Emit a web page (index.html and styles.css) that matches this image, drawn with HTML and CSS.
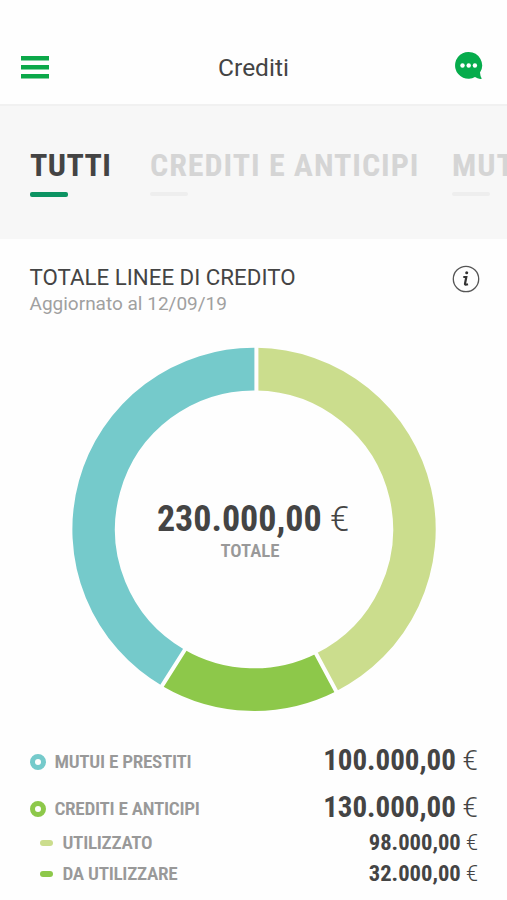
FILE: index.html
```html
<!DOCTYPE html>
<html lang="it">
<head>
    <meta charset="UTF-8">
    <title>Crediti</title>
    <link rel="stylesheet" href="styles.css">
</head>
<body>
<header class="topbar">
    <svg class="menu" width="28" height="24" viewBox="0 0 28 24">
        <path d="M1 3.2h26M1 12.2h26M1 21.2h26"/>
    </svg>
    <h1>Crediti</h1>
    <svg class="chat" width="28" height="28" viewBox="0 0 28 28">
        <path d="M13.7 0A13.4 13.4 0 1 0 20 25.1Q23 27.4 26.8 26.8Q25.2 24.6 25 20.6A13.4 13.4 0 0 0 13.7 0Z"/>
        <circle cx="7.5" cy="13.5" r="2.2"/>
        <circle cx="13.7" cy="13.5" r="2.2"/>
        <circle cx="19.9" cy="13.5" r="2.2"/>
    </svg>
</header>
<nav class="tabs">
    <a class="tab active"><span class="tab-name">TUTTI</span></a>
    <a class="tab"><span class="tab-name">CREDITI E ANTICIPI</span></a>
    <a class="tab"><span class="tab-name">MUT</span></a>
</nav>
<main>
    <div class="heading">
        <div>
            <h2>TOTALE LINEE DI CREDITO</h2>
            <p class="date">Aggiornato al 12/09/19</p>
        </div>
        <svg class="info" width="28" height="28" viewBox="0 0 28 28">
            <circle cx="14" cy="14" r="12.7"/>
            <circle class="dot" cx="14.7" cy="7.8" r="1.5"/>
            <path d="M11.3 12h3L13 18.8q-.2 1.4 3 .4"/>
        </svg>
    </div>
    <div class="chart">
        <svg class="ring" width="364" height="364" viewBox="-0.3 -0.3 364 364">
            <path class="used" d="M184 21.8A160.2 160.2 0 0 1 253.9 325.1"/>
            <path class="free" d="M253.9 325.1A160.2 160.2 0 0 1 101.1 320.5"/>
            <path class="loans" d="M101.1 320.5A160.2 160.2 0 0 1 184 21.8"/>
            <path class="gap" d="M184.1-2v48M265.5 347L242.2 303.5M88.4 340.6L113.8 300.5"/>
        </svg>
        <div class="total">
            <div class="amount huge"><b>230.000,00</b> <i>€</i></div>
            <span class="caption">TOTALE</span>
        </div>
    </div>
    <!-- legend -->
    <div class="legend">
        <div class="row">
            <span class="bullet teal"></span>
            <span class="label">MUTUI E PRESTITI</span>
            <span class="amount big"><b>100.000,00</b> <i>€</i></span>
        </div>
        <div class="row">
            <span class="bullet"></span>
            <span class="label">CREDITI E ANTICIPI</span>
            <span class="amount big"><b>130.000,00</b> <i>€</i></span>
        </div>
        <div class="row sub">
            <span class="dash lime"></span>
            <span class="label">UTILIZZATO</span>
            <span class="amount"><b>98.000,00</b> <i>€</i></span>
        </div>
        <div class="row sub">
            <span class="dash"></span>
            <span class="label">DA UTILIZZARE</span>
            <span class="amount"><b>32.000,00</b> <i>€</i></span>
        </div>
    </div>
</main>
</body>
</html>
```
FILE: styles.css
```css
* {
    box-sizing: border-box;
}
body {
    margin: 0;
    height: 900px;
    overflow: hidden;
    background-color: #fefefe;
    color: #444;
    font-family: Roboto, sans-serif;
}
h1, h2, p {
    margin: 0;
    font-weight: 400;
}
.topbar {
    display: flex;
    justify-content: space-between;
    height: 106px;
    padding: 52px 24px 0 21px;
    border-bottom: 2px solid #f1f1f1;
}
h1 {
    padding-left: 3px;
    font-size: 24.5px;
    line-height: 32px;
}
.menu {
    margin-top: 3px;
    stroke: #0ba849;
    stroke-width: 4.4;
}
.menu path {
    stroke-linecap: square;
}
.chat {
    fill: #06ac4c;
}
.chat circle {
    fill: #fff;
}
.tabs {
    display: flex;
    height: 133px;
    padding: 41px 0 0 30px;
    background-color: #f7f7f7;
    overflow: hidden;
}
.tab {
    flex: none;
    width: 302px;
    color: #d5d5d5;
    white-space: nowrap;
}
.tab-name {
    display: block;
    font-family: "Roboto Condensed", Roboto, sans-serif;
    font-stretch: 75%;
    font-weight: 700;
    font-size: 32px;
    line-height: 36px;
    letter-spacing: 0.95px;
}
.tab::after {
    content: "";
    display: block;
    width: 38px;
    height: 4px;
    margin-top: 9px;
    border-radius: 2px;
    background-color: #eee;
}
.tab.active {
    width: 120px;
    color: #444;
}
.tab.active .tab-name {
    letter-spacing: 0.4px;
}
.tab.active::after {
    height: 5px;
    background-color: #0c9362;
}
.heading {
    display: flex;
    justify-content: space-between;
    padding: 24px 27px 0 29.5px;
}
h2 {
    font-size: 22.3px;
    line-height: 28px;
}
.date {
    color: #a0a0a0;
    font-size: 19px;
    line-height: 25px;
}
.info {
    margin-top: 2px;
    fill: none;
    stroke: #555;
    stroke-width: 1.3;
}
.info path {
    stroke: #333;
    stroke-width: 2.2;
}
.info .dot {
    fill: #333;
    stroke: none;
}
.chart {
    display: grid;
    width: 364px;
    height: 364px;
    margin: 31px 0 0 72px;
}
.ring, .total {
    grid-area: 1 / 1;
}
.ring path {
    fill: none;
    stroke-width: 42.6;
}
.ring .used {
    stroke: #cbdd8d;
}
.ring .free {
    stroke: #8dc84a;
}
.ring .loans {
    stroke: #75cacb;
}
.ring .gap {
    stroke: #fefefe;
    stroke-width: 4;
}
.total {
    padding: 152px 2px 0 0;
    text-align: center;
}
.amount, .label, .caption {
    font-family: "Roboto Condensed", Roboto, sans-serif;
    font-stretch: 75%;
    white-space: nowrap;
}
.amount {
    font-size: 22.6px;
}
.amount i {
    font-family: Roboto, sans-serif;
    font-size: 0.96em;
    font-stretch: normal;
    font-style: normal;
    font-weight: 300;
}
.amount.big {
    margin-top: -3px;
    font-size: 29px;
}
.amount.huge {
    font-size: 36px;
    line-height: 40px;
}
.caption {
    display: block;
    padding-right: 6px;
    color: #999;
    font-size: 18.8px;
    font-weight: 600;
    line-height: 25px;
}
.legend {
    padding: 32px 29px 0 29.5px;
}
.row {
    display: flex;
    align-items: center;
    height: 37px;
    margin-bottom: 10px;
}
.row + .row {
    margin-bottom: 0;
}
.row.sub {
    height: 31px;
    padding-left: 10px;
}
.label {
    flex: 1;
    color: #999;
    font-size: 19.2px;
    font-weight: 600;
    letter-spacing: -0.3px;
}
.bullet {
    width: 16px;
    height: 16px;
    margin-right: 9px;
    border: 5px solid #8dc84a;
    border-radius: 50%;
}
.bullet.teal {
    border-color: #75cacb;
}
.dash {
    width: 13px;
    height: 6px;
    margin-right: 10px;
    border-radius: 3px;
    background-color: #8dc84a;
}
.dash.lime {
    background-color: #cbdd8d;
}
```
